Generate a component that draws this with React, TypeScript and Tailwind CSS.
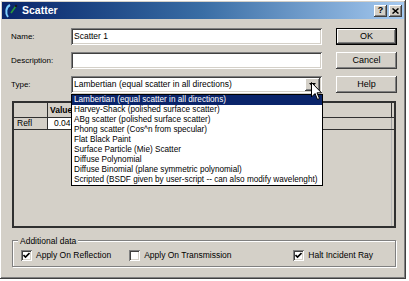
import React from "react";

const raised =
  "shadow-[inset_-1px_-1px_#404040,inset_1px_1px_#ffffff,inset_-2px_-2px_#808080,inset_2px_2px_#d4d0c8]";
const sunken =
  "shadow-[inset_1px_1px_#808080,inset_-1px_-1px_#ffffff,inset_2px_2px_#404040,inset_-2px_-2px_#d4d0c8]";

function CheckBox({ checked }: { checked: boolean }) {
  return (
    <div className={`w-[11px] h-[11px] bg-white ${sunken} flex items-center justify-center shrink-0`}>
      {checked && (
        <svg width="7" height="7" viewBox="0 0 7 7">
          <path d="M0.5 3 L2.5 5 L6.5 1" stroke="#000" strokeWidth="1.6" fill="none" />
        </svg>
      )}
    </div>
  );
}

const items = [
  "Lambertian (equal scatter in all directions)",
  "Harvey-Shack (polished surface scatter)",
  "ABg scatter (polished surface scatter)",
  "Phong scatter (Cos^n from specular)",
  "Flat Black Paint",
  "Surface Particle (Mie) Scatter",
  "Diffuse Polynomial",
  "Diffuse Binomial (plane symmetric polynomial)",
  "Scripted (BSDF given by user-script -- can also modify wavelenght)",
];

export default function App() {
  return (
    <div className="w-[409px] h-[281px] bg-white relative overflow-hidden font-['Liberation_Sans',Arial,sans-serif] text-black text-[8.5px]">
      <div
        className={`w-[406px] h-[279px] bg-[#d4d0c8] p-[2px] flex flex-col ${raised}`}
      >
        {/* Title bar */}
        <div className="h-[17px] flex items-center bg-linear-to-r from-[#0a246a] via-[#3a6ea5] to-[#a6caf0] pl-[2px] pr-[2px]">
          <svg width="15" height="14" viewBox="0 0 15 14" className="shrink-0">
            <path d="M6 1 C2 3 1 9 4 13" stroke="#7fd0ff" strokeWidth="2" fill="none" />
            <path d="M7 9 L12 2" stroke="#2a9a3a" strokeWidth="1.6" />
            <circle cx="12" cy="2" r="1.2" fill="#1a1a1a" />
          </svg>
          <span className="ml-[3px] text-white font-bold text-[10.5px] leading-none">Scatter</span>
          <div className="ml-auto flex gap-[2px] items-center">
            <div className={`w-[13px] h-[12px] bg-[#d4d0c8] ${raised} flex items-center justify-center font-bold text-[9px] leading-none`}>
              ?
            </div>
            <div className={`w-[13px] h-[12px] bg-[#d4d0c8] ${raised} flex items-center justify-center`}>
              <svg width="7" height="6" viewBox="0 0 7 6">
                <path d="M0.5 0.5 L6.5 5.5 M6.5 0.5 L0.5 5.5" stroke="#000" strokeWidth="1.5" />
              </svg>
            </div>
          </div>
        </div>

        {/* Form rows */}
        <div className="mt-[9px] flex flex-col gap-[7px] pl-[9px]">
          <div className="flex items-center h-[17px]">
            <div className="w-[60px] text-[8px]">Name:</div>
            <div className={`w-[251px] h-[17px] bg-white ${sunken} flex items-center pl-[3px]`}>Scatter 1</div>
            <div
              className={`ml-[14px] w-[61px] h-[17px] bg-[#d4d0c8] border border-black shadow-[inset_-1px_-1px_#404040,inset_1px_1px_#ffffff,inset_-2px_-2px_#808080] flex items-center justify-center text-[9px]`}
            >
              OK
            </div>
          </div>
          <div className="flex items-center h-[17px]">
            <div className="w-[60px] text-[8px]">Description:</div>
            <div className={`w-[251px] h-[17px] bg-white ${sunken}`}></div>
            <div className={`ml-[14px] w-[61px] h-[17px] bg-[#d4d0c8] ${raised} flex items-center justify-center text-[9px]`}>
              Cancel
            </div>
          </div>
          <div className="flex items-center h-[17px]">
            <div className="w-[60px] text-[8px]">Type:</div>
            <div className={`w-[251px] h-[17px] bg-white ${sunken} flex items-center pl-[3px] pr-[2px]`}>
              <span className="flex-1">Lambertian (equal scatter in all directions)</span>
              <div className={`w-[15px] h-[13px] bg-[#d4d0c8] ${raised} flex items-center justify-center`}>
                <svg width="7" height="4" viewBox="0 0 7 4">
                  <path d="M0 0 L7 0 L3.5 4 Z" fill="#000" />
                </svg>
              </div>
            </div>
            <div className={`ml-[14px] w-[61px] h-[17px] bg-[#d4d0c8] ${raised} flex items-center justify-center text-[9px]`}>
              Help
            </div>
          </div>
        </div>

        {/* Table */}
        <div className="mt-[8px] ml-[10px] w-[384px] h-[127px] border-2 border-[#303030] bg-[#d4d0c8] flex flex-col">
          <div className="h-[15px] flex border-b border-[#303030] shrink-0">
            <div className="w-[34px] border-r border-[#303030]"></div>
            <div className="w-[274px] border-r border-[#303030] flex items-center pl-[2px] font-bold">Value</div>
            <div className="w-[70px] border-r border-[#303030]"></div>
          </div>
          <div className="h-[12px] flex border-b border-[#303030] shrink-0">
            <div className="w-[34px] border-r border-[#303030] flex items-center pl-[3px]">Refl</div>
            <div className="w-[274px] bg-white flex items-center pl-[6px]">0.04</div>
            <div className="w-[70px] border-r border-[#a0a0a0]"></div>
          </div>
          <div className="flex-1 flex">
            <div className="w-[378px] border-r border-[#b8b8b8]"></div>
          </div>
        </div>

        {/* Group box */}
        <div className="mt-[12px] ml-[10px] w-[384px] h-[27px] relative border border-[#808080] shadow-[inset_1px_1px_#ffffff,1px_1px_#ffffff] flex items-center pt-[3px]">
          <div className="absolute -top-[5px] left-[5px] bg-[#d4d0c8] px-[2px] leading-[10px]">Additional data</div>
          <div className="flex items-center ml-[8px]">
            <CheckBox checked />
            <span className="ml-[4px]">Apply On Reflection</span>
          </div>
          <div className="flex items-center ml-[18px]">
            <CheckBox checked={false} />
            <span className="ml-[4px]">Apply On Transmission</span>
          </div>
          <div className="flex items-center ml-auto mr-[22px]">
            <CheckBox checked />
            <span className="ml-[4px]">Halt Incident Ray</span>
          </div>
        </div>
      </div>

      {/* Dropdown list overlay */}
      <div className="absolute left-[71px] top-[94px] w-[252px] h-[92px] bg-white border border-black flex flex-col text-[8.2px]">
        {items.map((t, i) => (
          <div
            key={t}
            className={`h-[10px] leading-[10px] pl-[2px] whitespace-nowrap ${
              i === 0 ? "bg-[#0a246a] text-white" : ""
            }`}
          >
            {t}
          </div>
        ))}
      </div>

      {/* Mouse cursor */}
      <svg className="absolute left-[311px] top-[82px]" width="12" height="19" viewBox="0 0 12 19">
        <path d="M0.5 0.5 L0.5 15 L4 11.5 L6.5 17.5 L8.5 16.5 L6 10.8 L10.5 10.8 Z" fill="#fff" stroke="#000" strokeWidth="1" />
      </svg>
    </div>
  );
}
